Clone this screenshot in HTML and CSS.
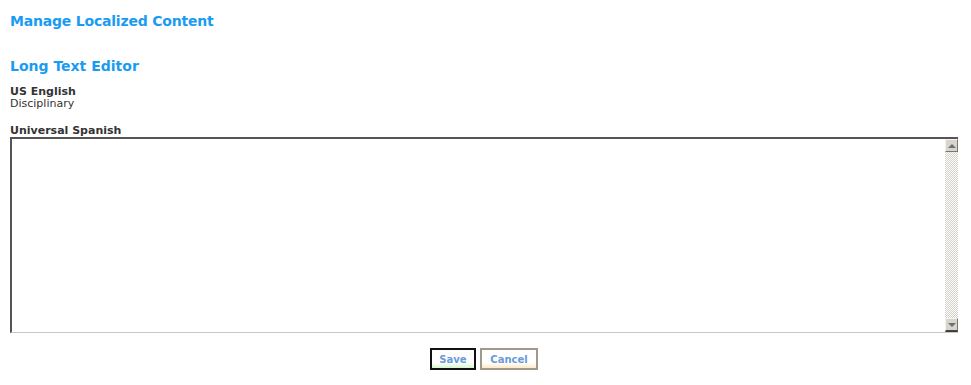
FILE: index.html
```html
<!DOCTYPE html>
<html>
<head>
    <title>Manage Localized Content</title>
    <link rel="stylesheet" href="styles.css">
</head>
<body>
    <h1 class="page-title">Manage Localized Content</h1>

    <h2 class="section-title">Long Text Editor</h2>

    <div class="field">
        <div class="field-label">US English</div>
        <div class="field-value">Disciplinary</div>
    </div>

    <div class="field">
        <div class="field-label">Universal Spanish</div>
        <div class="editor">
            <textarea class="editor-text"></textarea>
            <div class="scrollbar">
                <div class="scroll-btn"><span class="arrow-up"></span></div>
                <div class="scroll-track"></div>
                <div class="scroll-btn scroll-btn-down"><span class="arrow-down"></span></div>
            </div>
        </div>
    </div>

    <div class="button-row">
        <button class="btn btn-save">Save</button>
        <button class="btn btn-cancel">Cancel</button>
    </div>
</body>
</html>
```

FILE: styles.css
```css
body {
    margin: 0;
    padding: 0 13px 0 10px;
    background: #fff;
    color: #333;
    font-family: "DejaVu Sans", Verdana, sans-serif;
    font-size: 11px;
}
.page-title {
    margin: 0;
    padding-top: 12px;
    font-size: 14px;
    font-weight: bold;
    color: #1a9bf2;
    line-height: 18px;
    letter-spacing: -0.2px;
}
.section-title {
    margin: 0;
    padding-top: 27px;
    font-size: 14px;
    font-weight: bold;
    color: #1a9bf2;
    line-height: 18px;
}
.field {
    margin-top: 11px;
}
.field + .field {
    margin-top: 15px;
}
.field-label {
    font-weight: bold;
    line-height: 12px;
    color: #333;
}
.field-value {
    line-height: 12px;
    color: #333;
}
.editor {
    display: flex;
    height: 193px;
    border-top: 2px solid #555;
    border-left: 2px solid #555;
    border-bottom: 1px solid #c8c6c0;
}
.editor-text {
    flex: 1;
    border: none;
    margin: 0;
    padding: 2px;
    resize: none;
    outline: none;
    font-family: "DejaVu Sans", Verdana, sans-serif;
    font-size: 11px;
}
.scrollbar {
    width: 13px;
    display: flex;
    flex-direction: column;
}
.scroll-btn {
    height: 11px;
    background: #d8d5cc;
    border: 1px solid #f4f3ee;
    border-right-color: #7a776f;
    border-bottom-color: #7a776f;
    display: flex;
    align-items: center;
    justify-content: center;
}
.scroll-btn-down {
    border-bottom: 2px solid #404040;
}
.scroll-track {
    flex: 1;
    background: repeating-conic-gradient(#ffffff 0 25%, #d4d0c8 0 50%) 0 0 / 2px 2px;
}
.arrow-up {
    width: 0;
    height: 0;
    border-left: 4px solid transparent;
    border-right: 4px solid transparent;
    border-bottom: 4px solid #707070;
}
.arrow-down {
    width: 0;
    height: 0;
    border-left: 4px solid transparent;
    border-right: 4px solid transparent;
    border-top: 4px solid #707070;
}
.button-row {
    display: flex;
    justify-content: center;
    gap: 4px;
    margin-top: 15px;
}
.btn {
    height: 22px;
    padding: 0 4px;
    font-family: "DejaVu Sans", Verdana, sans-serif;
    font-size: 10px;
    font-weight: bold;
    color: #6a9ad8;
    cursor: pointer;
}
.btn-save {
    width: 46px;
    border: 2px solid #111;
    background: linear-gradient(#ffffff 70%, #d6f5cc 100%);
}
.btn-cancel {
    width: 58px;
    border: 2px solid #a09888;
    background: linear-gradient(#ffffff 70%, #fde9c6 100%);
}
```
